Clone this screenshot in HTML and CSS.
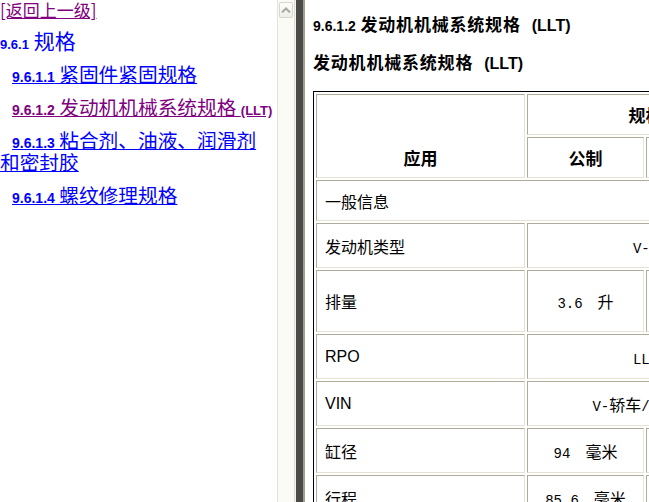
FILE: index.html
```html
<!DOCTYPE html>
<html>

<head>
    <meta charset="UTF-8">
    <title>9.6.1.2 发动机机械系统规格 (LLT)</title>
    <link rel="stylesheet" href="styles.css">
</head>

<body>
    <!-- left frame: table of contents -->
    <div class="nav">
        <a class="back visited" href="#">[返回上一级]</a>
        <h2><span class="no">9.6.1</span> 规格</h2>
        <ul class="toc">
            <li><a href="#"><span class="no">9.6.1.1</span> 紧固件紧固规格</a></li>
            <li class="nowrap"><a class="visited" href="#"><span class="no">9.6.1.2</span> 发动机机械系统规格 <span class="model">(LLT)</span></a></li>
            <li><a href="#"><span class="no">9.6.1.3</span> 粘合剂、油液、润滑剂和密封胶</a></li>
            <li><a href="#"><span class="no">9.6.1.4</span> 螺纹修理规格</a></li>
        </ul>
    </div>
    <div class="vscroll">
        <div class="arrow-up">
            <svg width="10" height="6" viewBox="0 0 10 6"><path d="M1 5.5 L5 1.5 L9 5.5" fill="none" stroke="#a9a9a4" stroke-width="2"/></svg>
        </div>
    </div>
    <div class="splitter"></div>

    <!-- right frame: document -->
    <div class="doc">
        <h1><span class="sec">9.6.1.2</span> 发动机机械系统规格<span class="model">(LLT)</span></h1>
        <h2 class="title">发动机机械系统规格<span class="model">(LLT)</span></h2>
        <table class="spec">
            <colgroup>
                <col class="c-app">
                <col class="c-metric">
                <col class="c-eng">
            </colgroup>
            <tr class="h41">
                <th rowspan="2" class="app">应用</th>
                <th colspan="2">规格</th>
            </tr>
            <tr class="h41">
                <th>公制</th>
                <th>英制</th>
            </tr>
            <tr class="h41">
                <td colspan="3">一般信息</td>
            </tr>
            <tr class="h45">
                <td>发动机类型</td>
                <td colspan="2" class="val"><span class="num">V-6</span></td>
            </tr>
            <tr class="h62">
                <td>排量</td>
                <td class="val"><span class="num">3.6</span><span class="unit">升</span></td>
                <td class="val"><span class="num">220</span><span class="unit">立方英寸</span></td>
            </tr>
            <tr class="h45">
                <td class="latin">RPO</td>
                <td colspan="2" class="val"><span class="num">LLT</span></td>
            </tr>
            <tr class="h45">
                <td class="latin">VIN</td>
                <td colspan="2" class="val"><span class="num">V-</span>轿车<span class="num">/K-</span>卡车</td>
            </tr>
            <tr class="h45">
                <td>缸径</td>
                <td class="val"><span class="num">94</span><span class="unit">毫米</span></td>
                <td class="val"><span class="num">3.70</span><span class="unit">英寸</span></td>
            </tr>
            <tr class="h45">
                <td>行程</td>
                <td class="val"><span class="num">85.6</span><span class="unit">毫米</span></td>
                <td class="val"><span class="num">3.37</span><span class="unit">英寸</span></td>
            </tr>
            <tr class="h45">
                <td>压缩比</td>
                <td colspan="2" class="val"><span class="num">10.2:1</span></td>
            </tr>
        </table>
    </div>
</body>

</html>
```

FILE: styles.css
```css
html,
body {
    margin: 0;
    padding: 0;
    height: 100%;
    overflow: hidden;
    background: #ffffff;
    font-family: "Noto Sans CJK SC", sans-serif;
}

body {
    display: flex;
}

/* left frame */
.nav {
    flex: none;
    width: 277px;
    overflow: hidden;
}

.nav a {
    color: #0000ff;
}

.nav a.visited {
    color: #800080;
}

.back {
    display: block;
    font-size: 17px;
    line-height: 19px;
}

.nav h2 {
    margin: 10px 0 12px;
    font-size: 21px;
    line-height: 22px;
    font-weight: normal;
    color: #0000ff;
}

.no {
    font-family: "Liberation Sans", sans-serif;
    font-weight: bold;
    font-size: 13px;
    line-height: 1;
}

.toc {
    list-style: none;
    margin: 0;
    padding: 0 6px 0 0;
}

.toc li {
    font-size: 19.7px;
    line-height: 22px;
    text-indent: 12px;
    margin-bottom: 11px;
}

.toc li .no {
    font-size: 14px;
}

.toc li.nowrap {
    white-space: nowrap;
}

.toc .model {
    font-family: "Liberation Sans", sans-serif;
    font-weight: bold;
    font-size: 13px;
    line-height: 1;
}

/* frame scrollbar and splitter */
.vscroll {
    flex: none;
    width: 16px;
    padding-top: 2px;
    background: #fbfbf5;
    border-left: 1px solid #e3e3dc;
    border-right: 1px solid #dcdcd2;
}

.arrow-up {
    display: flex;
    justify-content: center;
    align-items: center;
    width: 12px;
    height: 14px;
    margin-left: 1px;
    border: 1px solid #d6d6cc;
    border-radius: 2px;
    background: linear-gradient(#fefefc, #eeeee7);
}

.splitter {
    flex: none;
    width: 7px;
    background: #4b4b4b;
    border-left: 1px solid #f4f4ec;
    border-right: 2px solid #a39d8a;
}

/* right frame */
.doc {
    flex: 1;
    min-width: 0;
    overflow: hidden;
    padding-left: 8px;
    color: #000000;
}

.doc h1,
.doc h2 {
    margin: 18px 0 0;
    font-size: 17px;
    line-height: 20px;
    font-weight: bold;
    letter-spacing: 0.8px;
    white-space: nowrap;
}

.doc h1 {
    margin-top: 14px;
}

.sec {
    font-family: "Liberation Sans", sans-serif;
    font-size: 14px;
    line-height: 1;
    letter-spacing: 0;
}

.doc .model {
    margin-left: 11px;
    font-family: "Liberation Sans", sans-serif;
    font-size: 16px;
    line-height: 1;
    letter-spacing: 0;
}

.spec {
    margin-top: 19px;
    width: 454px;
    table-layout: fixed;
    border: 1px solid #000000;
    border-spacing: 2px;
}

.c-app {
    width: 209px;
}

.c-metric {
    width: 117px;
}

.c-eng {
    width: 118px;
}

.spec th,
.spec td {
    box-sizing: border-box;
    padding: 0 8px;
    border: 1px solid;
    border-color: #aeab98 #e5e3d6 #e5e3d6 #aeab98;
    font-size: 16px;
    line-height: 20px;
    white-space: nowrap;
    overflow: hidden;
}

.spec th {
    font-size: 17px;
    font-weight: bold;
    text-align: center;
}

.spec th.app {
    vertical-align: bottom;
    padding-bottom: 9px;
}

.h41 > * {
    height: 41px;
}

.h45 > * {
    height: 45px;
}

.h62 > * {
    height: 62px;
}

.spec td.latin {
    font-family: "Liberation Sans", sans-serif;
}

.spec td.val {
    text-align: center;
}

.num {
    font-family: "Liberation Mono", monospace;
    font-size: 14px;
    line-height: 1;
}

.unit {
    margin-left: 15px;
}
```
